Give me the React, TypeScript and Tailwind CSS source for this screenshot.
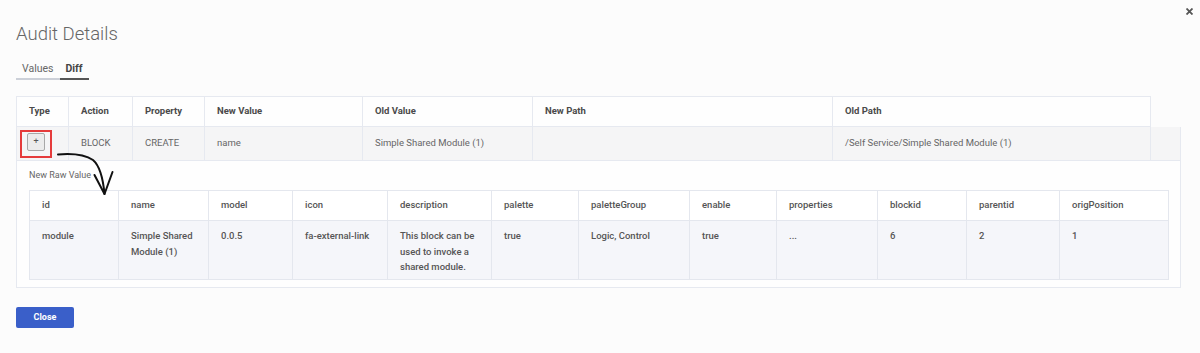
const outerCols = [
  { label: "Type", w: "w-[52px]" },
  { label: "Action", w: "w-[64px]" },
  { label: "Property", w: "w-[72px]" },
  { label: "New Value", w: "w-[158px]" },
  { label: "Old Value", w: "w-[170px]" },
  { label: "New Path", w: "w-[300px]" },
  { label: "Old Path", w: "w-[318px]" },
];

const outerRow = ["", "BLOCK", "CREATE", "name", "Simple Shared Module (1)", "", "/Self Service/Simple Shared Module (1)"];

const rawCols: { label: string; w: string; value: string[] }[] = [
  { label: "id", w: "w-[89px]", value: ["module"] },
  { label: "name", w: "w-[90px]", value: ["Simple Shared", "Module (1)"] },
  { label: "model", w: "w-[84px]", value: ["0.0.5"] },
  { label: "icon", w: "w-[95px]", value: ["fa-external-link"] },
  { label: "description", w: "w-[104px]", value: ["This block can be", "used to invoke a", "shared module."] },
  { label: "palette", w: "w-[87px]", value: ["true"] },
  { label: "paletteGroup", w: "w-[111px]", value: ["Logic, Control"] },
  { label: "enable", w: "w-[87px]", value: ["true"] },
  { label: "properties", w: "w-[101px]", value: ["..."] },
  { label: "blockid", w: "w-[89px]", value: ["6"] },
  { label: "parentid", w: "w-[93px]", value: ["2"] },
  { label: "origPosition", w: "w-[109px]", value: ["1"] },
];

export default function App() {
  return (
    <div className="relative w-[1200px] h-[353px] bg-[#fcfcfc] px-4 overflow-hidden font-['Roboto','Liberation_Sans',sans-serif]">
      {/* close x */}
      <button className="absolute right-[7px] top-[8px] w-[7px] h-[7px]">
        <svg width="7" height="7" viewBox="0 0 7 7">
          <path d="M0.5 0.5 L6.5 6.5 M6.5 0.5 L0.5 6.5" stroke="#555" strokeWidth="1.8" />
        </svg>
      </button>

      <h1 className="pt-5 text-[18.5px] leading-[28px] font-light text-[#666]">Audit Details</h1>

      {/* tabs */}
      <div className="mt-[13px] flex text-[10.5px] leading-[16px]">
        <div className="px-[6px] pb-[1px] border-b-2 border-[#ccd0d8] text-[#666]">Values</div>
        <div className="px-[6px] pb-[1px] border-b-2 border-[#555] font-bold text-[#444]">Diff</div>
      </div>

      {/* diff table */}
      <div className="mt-4 text-[9.5px]">
        <div className="flex w-[1135px] h-[31px] border-t border-b border-r border-[#e6e9f0] bg-[#fefefe]">
          {outerCols.map((c) => (
            <div key={c.label} className={`${c.w} border-l border-[#e6e9f0] pl-3 flex items-center font-bold text-[#4a4a4a]`}>
              {c.label}
            </div>
          ))}
        </div>
        <div className="flex w-[1165px] h-[34px] border-b border-r border-[#e6e9f0] bg-[#f5f5f6]">
          {outerCols.map((c, i) =>
            i === 0 ? (
              <div key={c.label} className={`${c.w} border-l border-[#e6e9f0] pl-[3px] pt-[3px]`}>
                <div className="w-[32px] h-[28px] border-2 border-[#e53b3b] flex justify-center pt-[1px]">
                  <div className="w-[18px] h-[18px] rounded-[2px] border border-[#a8a8a8] bg-[#ececec] flex items-center justify-center text-[9px] text-[#555]">
                    +
                  </div>
                </div>
              </div>
            ) : (
              <div key={c.label} className={`${c.w} border-l border-[#e6e9f0] pl-3 flex items-center text-[#666]`}>
                {outerRow[i]}
              </div>
            )
          )}
          <div className="w-[30px] border-l border-[#e6e9f0]" />
        </div>

        <div className="w-[1165px] border-l border-r border-b border-[#e6e9f0] bg-[#fefefe] pl-3 pr-[11px] pt-[7px] pb-[7px]">
          <div className="leading-[15px] text-[9px] text-[#666]">New Raw Value</div>
          <div className="mt-[7px] w-[1140px] border-t border-r border-b border-[#e4e7ee]">
            <div className="flex h-[30px] border-b border-[#e4e7ee] bg-white">
              {rawCols.map((c) => (
                <div key={c.label} className={`${c.w} border-l border-[#e4e7ee] pl-3 flex items-center font-medium text-[#555]`}>
                  {c.label}
                </div>
              ))}
            </div>
            <div className="flex h-[58px] bg-[#f5f6fa]">
              {rawCols.map((c) => (
                <div key={c.label} className={`${c.w} border-l border-[#e4e7ee] pl-3 pt-[7px] leading-[15.5px] font-medium text-[#555]`}>
                  {c.value.map((v) => (
                    <div key={v} className="whitespace-nowrap">{v}</div>
                  ))}
                </div>
              ))}
            </div>
          </div>
        </div>
      </div>

      <button className="mt-[19px] w-[58px] h-[21px] rounded-[2px] bg-[#3a5fc9] text-white text-[9px] font-bold">
        Close
      </button>

      {/* hand drawn arrow annotation */}
      <svg className="absolute left-0 top-0 pointer-events-none" width="1200" height="353" viewBox="0 0 1200 353">
        <path
          d="M58 154.5 C70 153.5 84 154 93 160 C100 166 103 178 104.5 194"
          fill="none"
          stroke="#111"
          strokeWidth="2"
          strokeLinecap="round"
        />
        <path d="M94.5 175 L104.5 194 L112.5 172" fill="none" stroke="#111" strokeWidth="2" strokeLinecap="round" strokeLinejoin="round" />
      </svg>
    </div>
  );
}
